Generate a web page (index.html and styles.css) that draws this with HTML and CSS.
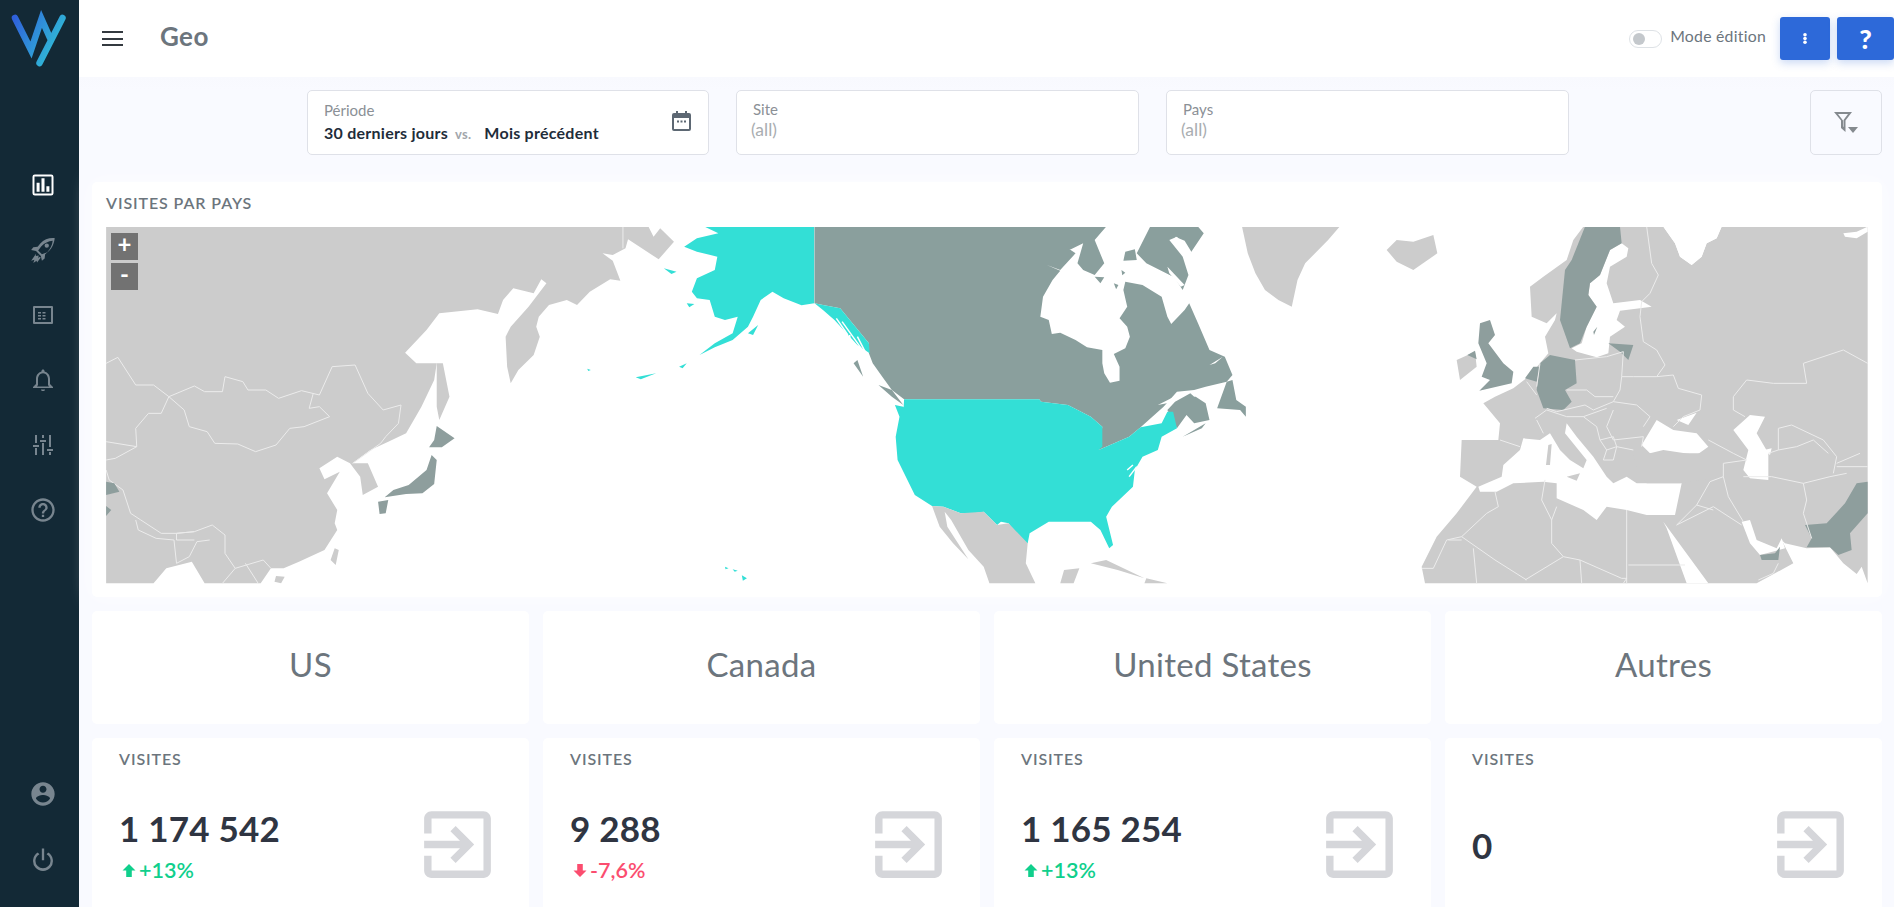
FILE: index.html
```html
<!DOCTYPE html>
<html lang="fr">
<head>
<meta charset="utf-8">
<title>Geo</title>
<link rel="stylesheet" href="styles.css">
</head>
<body>
<div class="app">
  <aside class="sidebar">
    <svg class="logo" viewBox="0 0 66 70" fill="none" stroke="url(#lg)" stroke-width="6.500" stroke-linecap="round" stroke-linejoin="miter">
      <defs><linearGradient id="lg" gradientUnits="userSpaceOnUse" x1="12" y1="20" x2="66" y2="50"><stop offset="0" stop-color="#2f5fdb"/><stop offset="1" stop-color="#30c8d6"/></linearGradient></defs>
      <path d="M15 18L31 50L41.500 19L50 38"/>
      <path d="M62.500 18L39.500 63"/>
    </svg>
    <nav class="nav">
      <a class="nav-item active"><svg viewBox="0 0 24 24"><path d="M19 3H5a2 2 0 0 0-2 2v14a2 2 0 0 0 2 2h14a2 2 0 0 0 2-2V5a2 2 0 0 0-2-2zm.3 16.300H4.700V4.700h14.600v14.600zM6.500 10h2.600v7.800H6.500zm4.200 -3.800h2.600v11.600h-2.600zm4.200 6.800h2.600v4.800h-2.600z"/></svg></a>
      <a class="nav-item"><svg viewBox="-1 -1 26 26"><path d="M23 1c-5-.5-10 1-13.500 5L7 9l-4 .5L1 12l4.500 1L10 17.500l1 4.500 2.500-2 .5-4 3-2.500c4-3.500 5.500-8.500 6-13zM11 16l-3.500-3.500 3-4c3-3 6.500-4.500 10.500-5-.5 4-2 7.500-5 10.500z"/><circle cx="15.500" cy="8" r="2"/><path d="M5.500 15.500L1 22l3-1-1 3 3-2 .5 1.500L10 19l-1.500-.5-1 1.200.5-2.700-2.700.5z"/></svg></a>
      <a class="nav-item"><svg viewBox="-2 -2 28 28"><path d="M21 3H3a1 1 0 0 0-1 1v16a1 1 0 0 0 1 1h18a1 1 0 0 0 1-1V4a1 1 0 0 0-1-1zm-1 16H4V5h16v14zM7 9h3v1.500H7zm4.500 0h3v1.500h-3zM7 12h3v1.500H7zm4.500 0h3v1.500h-3zM7 15h3v1.500H7zm4.500 0h3v1.500h-3z"/></svg></a>
      <a class="nav-item"><svg viewBox="-2 -2 28 28"><path d="M12 23c1.100 0 2-.5 2-1.500h-4c0 1 .9 1.500 2 1.500zm7-7v-5c0-3.500-2-6.500-5.500-7.500V3c0-.9-.6-1.500-1.500-1.500s-1.500.6-1.500 1.500v.5C7 4.500 5 7.500 5 11v5l-3 3v1h20v-1l-3-3zm-1 2.500H6l1-1.500v-6c0-3 2-5.800 5-5.800s5 2.800 5 5.800v6l1 1.500z"/></svg></a>
      <a class="nav-item"><svg viewBox="-2 -2 28 28"><path d="M4 2h2v8H4zM2 12h6v2H2zM4 15h2v7H4zM11 2h2v3h-2zM9 7h6v2H9zM11 10h2v12h-2zM18 2h2v12h-2zM16 16h6v2h-6zM18 19h2v3h-2z"/></svg></a>
      <a class="nav-item"><svg viewBox="0 0 24 24"><path d="M11 18h2v-2h-2v2zm1-16C6.480 2 2 6.480 2 12s4.480 10 10 10 10-4.480 10-10S17.520 2 12 2zm0 18c-4.410 0-8-3.590-8-8s3.590-8 8-8 8 3.590 8 8-3.590 8-8 8zm0-14c-2.210 0-4 1.790-4 4h2c0-1.100.9-2 2-2s2 .9 2 2c0 2-3 1.750-3 5h2c0-2.250 3-2.500 3-5 0-2.210-1.790-4-4-4z"/></svg></a>
    </nav>
    <nav class="nav nav-bottom">
      <a class="nav-item"><svg viewBox="0 0 24 24"><path d="M12 2C6.480 2 2 6.480 2 12s4.480 10 10 10 10-4.480 10-10S17.520 2 12 2zm0 3c1.660 0 3 1.340 3 3s-1.340 3-3 3-3-1.340-3-3 1.340-3 3-3zm0 14.200c-2.500 0-4.710-1.280-6-3.220.03-1.990 4-3.080 6-3.080 1.990 0 5.970 1.090 6 3.080-1.290 1.940-3.500 3.220-6 3.220z"/></svg></a>
      <a class="nav-item"><svg viewBox="0 0 24 24"><path d="M11 3h2v10h-2zM7.500 6.500l1.400 1.500A6.500 6.500 0 0 0 5.500 13.500a6.500 6.500 0 0 0 13 0A6.500 6.500 0 0 0 15.100 8l1.400-1.500a8.500 8.500 0 1 1-9 0z"/></svg></a>
    </nav>
  </aside>

  <main class="main">
    <header class="topbar">
      <button class="burger" aria-label="menu"><span></span><span></span><span></span></button>
      <h1 class="page-title">Geo</h1>
      <div class="top-actions">
        <span class="toggle"><span class="toggle-knob"></span></span>
        <span class="toggle-label">Mode édition</span>
        <button class="btn btn-dots"><svg viewBox="0 0 4 11" class="dots"><circle cx="2" cy="1.800" r="1.800"/><circle cx="2" cy="5.500" r="1.800"/><circle cx="2" cy="9.200" r="1.800"/></svg></button>
        <button class="btn btn-help">?</button>
      </div>
    </header>

    <section class="filters">
      <div class="field field-period">
        <div>
          <div class="field-label">Période</div>
          <div class="field-value"><b>30 derniers jours</b><span class="vs">vs.</span><b>Mois précédent</b></div>
        </div>
        <svg class="cal" viewBox="0 0 19 20"><path d="M4 0h2v2h7V0h2v2h2a2 2 0 0 1 2 2v14a2 2 0 0 1-2 2H2a2 2 0 0 1-2-2V4a2 2 0 0 1 2-2h2zM2 7v11h15V7z"/><path d="M5 9.500h2v2H5zm3.500 0h2v2h-2zm3.500 0h2v2h-2z"/></svg>
      </div>
      <div class="field field-select"><div class="field-label">Site</div><div class="field-all">(all)</div></div>
      <div class="field field-select"><div class="field-label">Pays</div><div class="field-all">(all)</div></div>
      <button class="filter-btn"><svg viewBox="0 0 24 21" class="filter-ico"><path fill-rule="evenodd" d="M0 0H18L11.500 8.500V20L7 16V8.500ZM4 2L9 8.500V14.500L9.500 15V8L14 2Z"/><path d="M14 15H24L19 21Z"/></svg></button>
    </section>

    <div class="content">
      <section class="card map-card">
        <h2 class="card-title">VISITES PAR PAYS</h2>
        <div class="map">
          <svg class="map-svg" viewBox="106 227 1762 357" preserveAspectRatio="none">
            <g transform="translate(100 220) scale(.5102 .33333)">
              <path class="land" d="M12 20L1075 20 1085 50 1098 25 1125 65 1095 118 1062 85 1035 58 1030 85 1005 105 985 100 1005 122 1020 182 1000 178 960 215 935 255 915 240 880 255 860 290 855 320 862 350 850 405 820 450 805 490 798 440 795 350 805 320 840 260 875 190 865 178 850 220 810 205 790 240 780 282 740 268 665 280 640 330 598 398 620 430 660 430 655 480 630 560 600 640 565 665 530 690 495 730 525 730 545 800 515 825 510 770 490 730 465 710 430 745 440 778 470 755 445 820 465 870 460 910 465 930 440 990 390 1025 360 1045 335 1045 315 1090 205 1090 180 1025 130 1045 105 1090 12 1090Z"/>
              <path class="land" d="M660 430L672 430 685 530 665 600 660 560ZM460 985L468 990 462 1035 452 1020ZM345 1068L362 1070 355 1090 342 1085Z"/>
              <path class="border" d="M12 430L35 412 70 495 105 495 135 530 185 498 205 515 240 515 245 470 280 485 290 510 325 510 350 535 395 512 430 525 455 440 500 435 525 520 555 570 590 555 585 610 560 650 550 670 495 730M135 530L165 570 175 620 210 635 225 670 270 672 305 695 345 675 372 625 400 620 450 590 430 560 410 565 418 520M135 530L120 580 95 580 70 625 72 680 12 665M72 680L30 715 12 720M12 750L18 780 45 810 60 880 80 900 120 940 150 940 185 935 220 915 245 945 245 1000 265 1045 320 1020 335 1045M70 900L75 930 110 955 145 960 150 1030 175 1010 190 965 215 960M185 935L150 940 150 960 185 960M265 1045L240 1090M285 1030L310 1090M1025 20L1025 85"/>
              <path class="dark" d="M12 785L28 790 38 815 12 825ZM12 858L22 870 12 888ZM660 618L695 655 670 682 645 682 655 660ZM650 705L660 720 655 792 632 820 600 822 558 832 575 810 605 795 640 750ZM545 845L565 840 560 880 548 882Z"/>
              <path class="teal" d="M1185 20L1400 20 1400 250 1375 256 1340 235 1318 215 1295 240 1280 290 1270 320 1240 360 1205 382 1175 405 1205 370 1240 340 1250 290 1225 300 1205 290 1195 240 1170 235 1160 215 1170 175 1205 150 1210 110 1170 95 1145 80 1170 55 1212 40ZM1105 145L1130 155 1120 162ZM1150 250L1165 252 1155 262ZM1290 315L1280 345 1270 340ZM1225 1040L1232 1045 1226 1048ZM1240 1048L1250 1052 1244 1055ZM1258 1066L1268 1075 1260 1082ZM955 446L962 450 957 453ZM1135 440L1150 430 1142 445ZM1050 472L1090 460 1060 478Z"/>
            </g>
            <g transform="translate(800 220) scale(.3827 .33333)">
              <path class="dark2" d="M38 20L800 20 770 60 795 130 770 165 740 150 725 130 740 70 700 92 675 65 720 100 680 150 645 135 680 152 660 180 635 230 628 290 650 300 658 342 680 338 720 360 750 382 790 390 790 430 795 460 810 488 835 482 835 440 820 402 850 385 862 350 855 320 835 295 855 260 845 210 850 185 895 195 945 230 960 290 970 312 1005 270 1017 250 1040 310 1070 390 1110 410 1130 465 1115 485 1060 500 1030 510 985 515 950 560 890 622 860 650 830 665 780 690 790 620 760 590 700 555 630 545 625 538 272 538 240 510 215 470 190 430 180 400 180 370 105 265 60 255 38 250Z"/>
              <path class="dark2" d="M915 20L1040 20 1055 40 1020 100 985 50 965 60 1000 110 1015 165 1000 210 960 140 975 170 905 130 880 100ZM1020 520L1060 550 1070 600 1030 610 1010 585 985 625 960 570 980 545ZM1000 650L1060 610 1050 625ZM150 420L165 470 140 430ZM205 495L240 510 270 555 240 530ZM850 95L875 88 880 120 845 122ZM770 170L795 172 785 190ZM820 190L832 195 826 208ZM840 150L850 158 842 166ZM1090 565L1115 485 1130 480 1140 540 1165 560 1165 590 1150 570Z"/>
              <path class="sea" d="M1070 435L1105 410 1085 430ZM960 140L1005 195 995 200 965 160ZM980 50L1005 62 1025 100 1000 100ZM935 555L975 532 965 548ZM1020 520L1048 525 1030 530Z"/>
              <path class="teal" d="M38 250L60 255 105 265 180 370 182 400 150 375 90 300 60 270ZM272 538L625 538 630 545 700 555 760 590 790 620 790 680 780 690 830 665 860 650 890 622 945 610 960 575 975 575 985 625 945 650 935 690 895 710 875 750 870 800 815 860 800 890 818 975 808 985 785 930 760 905 700 905 650 905 600 940 595 970 575 965 545 910 525 905 515 915 480 875 455 880 420 880 375 860 345 858 300 825 255 720 250 650 260 590 248 555 270 560 278 580 270 580Z"/>
              <path class="sea-line" d="M95 295L125 345M110 305L160 385M130 345L130 380M150 350L170 395M855 750L870 735M860 770L880 740"/>
              <path class="land" d="M345 858L375 860 420 880 480 875 515 915 545 910 595 970 590 1030 615 1090 495 1090 480 1040 440 990 395 900 378 875 385 920 440 1018 400 970 365 920ZM680 1090L690 1050 730 1045 715 1090ZM760 1030L800 1020 900 1075 830 1050ZM905 1075L960 1090 900 1090ZM1155 20L1410 20 1380 60 1320 130 1300 180 1285 260 1250 240 1215 210 1190 160 1170 100Z"/>
            </g>
            <g transform="translate(1380 220) scale(.33333)">
              <path class="land" d="M610 20L850 20 885 70 900 110 935 135 965 110 980 70 1010 55 1025 20 1463 20 1463 1090 1445 1040 1430 1062 1390 1030 1350 982 1280 985 1215 970 1205 960 1240 1030 1185 1060 1130 1090 135 1090 125 1040 170 950 230 880 290 800 240 770 245 660 355 660 360 610 310 550 345 530 400 505 445 470 480 430 505 400 495 350 525 300 530 280 500 310 455 290 450 200 490 170 560 120 580 60Z"/>
              <path class="land" d="M20 90L50 60 100 65 160 45 172 100 100 150 50 125ZM230 420L285 395 290 440 240 480Z"/>
              <path class="sea" d="M295 800L365 770 370 735 420 690 430 655 480 660 510 640 540 690 570 720 610 745 620 720 555 640 560 610 590 650 640 710 680 770 700 790 740 770 770 790 800 790 905 790 885 885 800 885 740 870 680 860 650 900 610 870 530 835 530 790 490 785 400 790 350 815 300 815ZM785 675L830 600 880 630 950 640 985 680 950 705 850 690 810 700ZM890 600L950 578 925 615ZM1060 630L1110 585 1155 590 1130 640 1165 700 1165 780 1110 775 1090 750 1105 690ZM1152 690L1175 685 1170 705ZM1085 905L1110 900 1130 960 1190 985 1205 955 1215 985 1140 1005 1110 970ZM850 905L985 1090 920 1090 860 925ZM725 70L745 85 740 110 690 140 680 190 700 250 780 240 815 260 780 265 720 272 710 300 735 320 690 350 685 400 650 412 590 395 575 385 605 370 620 320 650 260 625 225 630 190 660 165 690 90Z"/>
              <path class="sea" d="M850 20L1025 20 1010 55 980 70 965 110 935 135 900 110 885 70ZM1390 40L1430 35 1463 20 1463 35 1430 55 1395 50Z"/>
              <path class="land" d="M505 675L515 672 510 735 498 735ZM560 770L600 760 590 782ZM760 700L1025 700 1030 770 900 790 800 790 770 745Z"/>
              <path class="dark" d="M615 20L720 20 725 70 690 90 660 165 630 190 625 225 650 260 620 320 600 370 570 385 540 300 555 150 575 120ZM300 310L330 300 345 345 325 370 370 430 400 455 395 490 298 512 330 480 305 470 320 430 295 370ZM262 405L285 392 290 418ZM480 430L510 405 585 420 590 490 555 510 575 545 550 570 490 565 470 510ZM435 475L460 440 480 440 470 485ZM685 370L760 375 745 420 720 395ZM1430 790L1463 785 1463 880 1410 940 1415 990 1375 1005 1350 982 1280 982 1295 955 1275 915 1340 910 1395 850ZM1140 1005L1185 1000 1200 980 1195 1020 1145 1020ZM640 335L652 320 642 345Z"/>
              <path class="border" d="M800 20L815 130 835 165 810 220 785 245M785 245L780 290 790 365 830 390 855 435 830 470 760 470 725 470 730 395 680 410 585 420M725 470L720 510 700 545M830 470L880 465 895 505 965 525 960 570 910 590 880 620M700 545L770 555 810 590 790 620M560 510L620 510 645 530 700 530M500 565L530 575 615 555 640 570 700 545M465 595L500 570 560 590 610 590 680 565M610 590L650 620 660 660 700 650 710 680 760 690M700 570L680 620 700 660 790 650 785 680M660 660L680 690 710 680 700 720 670 720 680 690M440 485L470 525M480 430L470 500M360 660L420 680M470 600L490 640M985 660L1060 700 1100 720 1030 730 1030 770 1045 830 1090 905M1030 770L990 785 950 855 890 915M1090 770L1175 770 1270 790 1280 840 1270 880 1295 955M1270 790L1350 770 1400 760M1165 700L1195 690 1195 625 1235 615 1330 660 1370 710 1360 760M1060 530L1060 570 1095 590M1060 530L1100 480 1180 490 1280 490 1270 430 1390 390 1463 430M1195 690L1250 680 1300 660 1345 700M1370 730L1440 700M1370 740L1463 740M890 915L1000 860 1085 915M950 855L1000 870M1195 1030L1180 1060 1135 1080M245 950L320 880 355 860 345 815M245 950L345 1020 440 1080M245 950L200 960 160 1045 125 1045M205 960L245 960M280 985L290 1090M495 780L485 840 515 900 515 970 550 1010 600 1020 725 1075 740 1075M515 900L530 860M740 870L740 1090M745 1035L915 1035M550 1010L435 1080M600 1020L605 1090M740 1075L730 1090"/>
            </g>
          </svg>
          <div class="zoom-ctrl">
            <span class="zoom-btn">+</span>
            <span class="zoom-btn">-</span>
          </div>
        </div>
      </section>

      <section class="grid">
        <div class="card name-card">US</div>
        <div class="card name-card">Canada</div>
        <div class="card name-card">United States</div>
        <div class="card name-card">Autres</div>

        <article class="card stat-card">
          <h3 class="stat-title">VISITES</h3>
          <div class="stat-body">
            <div><div class="stat-num">1 174 542</div>
            <div class="delta up"><svg viewBox="0 0 14 14"><path d="M7 0l7 7H10v7H4V7H0z"/></svg>+13%</div></div>
            <svg class="stat-ico" viewBox="0 0 24 24"><path d="M10.090 15.590L11.500 17l5-5-5-5-1.410 1.410L12.670 11H3v2h9.670l-2.580 2.590zM19 3H5c-1.110 0-2 .9-2 2v4h2V5h14v14H5v-4H3v4c0 1.100.89 2 2 2h14c1.100 0 2-.9 2-2V5c0-1.100-.9-2-2-2z"/></svg>
          </div>
        </article>
        <article class="card stat-card">
          <h3 class="stat-title">VISITES</h3>
          <div class="stat-body">
            <div><div class="stat-num">9 288</div>
            <div class="delta down"><svg viewBox="0 0 14 14"><path d="M7 14L0 7h4V0h6v7h4z"/></svg>-7,6%</div></div>
            <svg class="stat-ico" viewBox="0 0 24 24"><path d="M10.090 15.590L11.500 17l5-5-5-5-1.410 1.410L12.670 11H3v2h9.670l-2.580 2.590zM19 3H5c-1.110 0-2 .9-2 2v4h2V5h14v14H5v-4H3v4c0 1.100.89 2 2 2h14c1.100 0 2-.9 2-2V5c0-1.100-.9-2-2-2z"/></svg>
          </div>
        </article>
        <article class="card stat-card">
          <h3 class="stat-title">VISITES</h3>
          <div class="stat-body">
            <div><div class="stat-num">1 165 254</div>
            <div class="delta up"><svg viewBox="0 0 14 14"><path d="M7 0l7 7H10v7H4V7H0z"/></svg>+13%</div></div>
            <svg class="stat-ico" viewBox="0 0 24 24"><path d="M10.090 15.590L11.500 17l5-5-5-5-1.410 1.410L12.670 11H3v2h9.670l-2.580 2.590zM19 3H5c-1.110 0-2 .9-2 2v4h2V5h14v14H5v-4H3v4c0 1.100.89 2 2 2h14c1.100 0 2-.9 2-2V5c0-1.100-.9-2-2-2z"/></svg>
          </div>
        </article>
        <article class="card stat-card">
          <h3 class="stat-title">VISITES</h3>
          <div class="stat-body">
            <div><div class="stat-num">0</div></div>
            <svg class="stat-ico" viewBox="0 0 24 24"><path d="M10.090 15.590L11.500 17l5-5-5-5-1.410 1.410L12.670 11H3v2h9.670l-2.580 2.590zM19 3H5c-1.110 0-2 .9-2 2v4h2V5h14v14H5v-4H3v4c0 1.100.89 2 2 2h14c1.100 0 2-.9 2-2V5c0-1.100-.9-2-2-2z"/></svg>
          </div>
        </article>
      </section>
    </div>
  </main>
</div>
</body>
</html>
```

FILE: styles.css
```css
* { box-sizing: border-box; }
html, body { margin: 0; height: 100%; overflow: hidden; }
body { font-family: Lato, "Noto Sans", sans-serif; color: #6c757d; background: #f6f7fc; }
h1, h2, h3 { margin: 0; font-weight: 600; }
button { font-family: inherit; border: 0; padding: 0; cursor: pointer; }

.app { display: flex; height: 907px; overflow: hidden; }

.sidebar { width: 79px; flex: none; background: #132936; display: flex; flex-direction: column; }
.logo { width: 66px; height: 70px; flex: none; }
.nav { display: flex; flex-direction: column; gap: 37px; margin: 101px 0 0 29px; }
.nav-bottom { margin-top: auto; padding-bottom: 34px; }
.nav-item { display: block; width: 28px; height: 28px; }
.nav-item svg { display: block; width: 28px; height: 28px; fill: #78858f; }
.nav-item.active svg { fill: #fff; }

.main { flex: 1; min-width: 0; display: flex; flex-direction: column; background: linear-gradient(#f2f3f8, #f9faff 90px); }

.topbar { height: 77px; flex: none; background: #fff; display: flex; align-items: center; padding-left: 23px; }
.burger { width: 21px; height: 15px; background: none; display: flex; flex-direction: column; justify-content: space-between; }
.burger span { display: block; height: 2px; background: #343a40; }
.page-title { font-size: 26px; font-weight: 700; color: #6c757d; margin-left: 37px; letter-spacing: .4px; padding-bottom: 6px; }
.top-actions { margin-left: auto; display: flex; align-items: center; }
.toggle { width: 33px; height: 18px; border: 1px solid #dee2e6; border-radius: 9px; background: #fff; display: flex; align-items: center; padding-left: 3px; }
.toggle-knob { width: 12px; height: 12px; border-radius: 50%; background: #c4c8cc; }
.toggle-label { font-size: 15.800px; margin-left: 8px; color: #6c757d; letter-spacing: .25px; padding-bottom: 6px; }
.btn { height: 43px; background: #2d69d9; color: #fff; border-radius: 3px; box-shadow: 0 3px 8px rgba(45,105,217,.25); display: flex; align-items: center; justify-content: center; }
.btn-dots { width: 50px; margin-left: 14px; }
.dots { width: 4px; height: 11px; fill: #fff; }
.btn-help { width: 57px; margin-left: 7px; font-size: 27px; font-weight: 900; }

.filters { display: flex; padding: 13px 12px 0 228px; height: 78px; flex: none; gap: 27px; }
.field { height: 65px; background: #fff; border: 1px solid #dfe1e8; border-radius: 5px; padding: 9px 16px 10px; }
.field-period { width: 402px; display: flex; justify-content: space-between; align-items: center; }
.field-select { width: 403px; }
.field-label { font-size: 15px; line-height: 18px; color: #8b9096; }
.field-value { font-size: 16px; line-height: 20px; margin-top: 4px; color: #1f2d3a; display: flex; align-items: baseline; white-space: nowrap; letter-spacing: .25px; }
.field-value b { font-weight: 700; }
.vs { font-size: 13px; font-weight: 700; color: #a2a6ab; margin: 0 13px 0 7px; }
.cal { width: 19px; height: 20px; fill: #5d6873; margin-right: 1px; margin-top: -2px; }
.field-all { font-size: 17.500px; line-height: 22px; color: #a9adb1; margin-left: -2px; margin-top: 1px; }
.filter-btn { margin-left: auto; width: 72px; height: 65px; background: transparent; border: 1px solid #dfe1e8; border-radius: 5px; display: flex; align-items: center; justify-content: center; }
.filter-ico { width: 24px; height: 21px; fill: #858a8f; }

.content { padding: 27px 12px 0 13px; display: flex; flex-direction: column; gap: 14px; }
.card { background: #fff; border-radius: 5px; }
.map-card { height: 415px; padding: 11px 14px 13px; display: flex; flex-direction: column; box-shadow: 0 0 20px rgba(255,255,255,.7); }
.card-title { font-size: 16px; line-height: 20px; height: 34px; color: #6c757d; letter-spacing: .9px; font-weight: 600; }
.map { position: relative; flex: 1; background: #fff; overflow: hidden; }
.map-svg { display: block; width: 100%; height: 100%; }
.land { fill: #cccccc; }
.dark { fill: #8e9e9d; }
.dark2 { fill: #8a9f9d; }
.teal { fill: #33dfd6; }
.sea { fill: #fff; }
.border { fill: none; stroke: #ececec; stroke-width: 1; vector-effect: non-scaling-stroke; }
.sea-line { fill: none; stroke: #fff; stroke-width: 1.500; vector-effect: non-scaling-stroke; }

.zoom-ctrl { position: absolute; left: 5px; top: 6px; display: flex; flex-direction: column; gap: 3px; }
.zoom-btn { width: 27px; height: 27px; background: #727272; color: #fff; font-size: 24px; line-height: 22px; font-weight: 700; text-align: center; }

.grid { display: grid; grid-template-columns: repeat(4, 1fr); gap: 14px; }
.name-card { height: 113px; display: flex; align-items: center; justify-content: center; font-size: 33px; font-weight: 400; color: #6c757d; letter-spacing: .3px; padding-bottom: 7px; }
.stat-card { height: 200px; padding: 11px 27px 0 27px; }
.stat-title { font-size: 16px; line-height: 20px; font-weight: 600; color: #6c757d; letter-spacing: .9px; }
.stat-body { display: flex; justify-content: space-between; align-items: center; margin-top: 31px; height: 89px; }
.stat-num { font-size: 35px; line-height: 44px; font-weight: 700; color: #2f3542; letter-spacing: .2px; }
.delta { font-size: 21.500px; line-height: 26px; margin-top: 7px; display: flex; align-items: center; gap: 3px; font-weight: 600; }
.delta svg { width: 14px; height: 13px; margin-left: 3px; fill: currentColor; }
.up { color: #10cf8c; }
.down { color: #fb4d6f; }
.stat-ico { width: 89px; height: 89px; fill: #d5d6da; }
```
